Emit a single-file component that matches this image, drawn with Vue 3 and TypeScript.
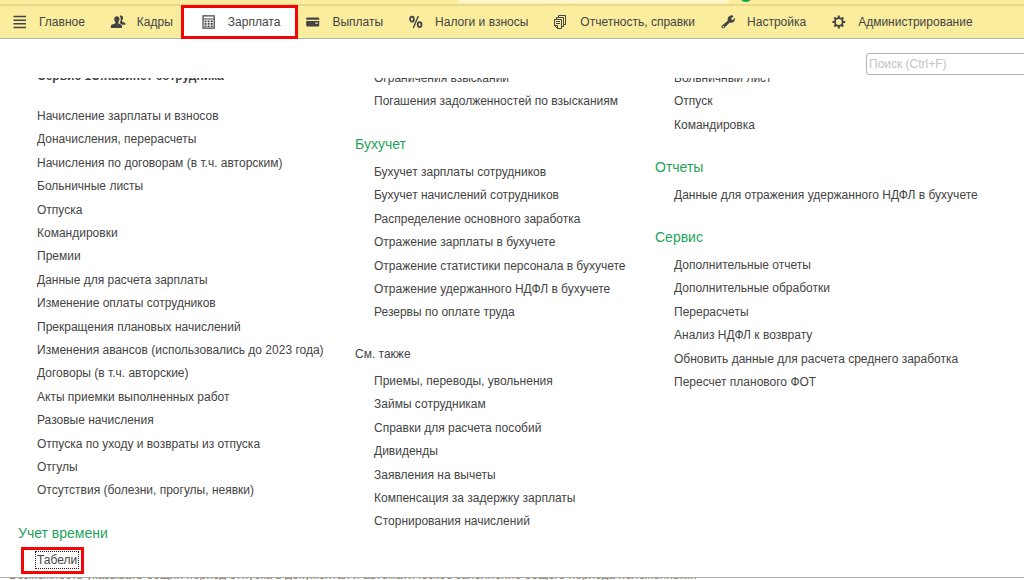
<script setup lang="ts">
interface NavItem { icon: string; label: string; active?: boolean }
interface Group { title?: string; kind?: 'green' | 'plain' | 'bold'; items: string[] }

const nav: NavItem[] = [
  { icon: 'menu', label: 'Главное' },
  { icon: 'people', label: 'Кадры' },
  { icon: 'calc', label: 'Зарплата', active: true },
  { icon: 'card', label: 'Выплаты' },
  { icon: 'percent', label: 'Налоги и взносы' },
  { icon: 'docs', label: 'Отчетность, справки' },
  { icon: 'wrench', label: 'Настройка' },
  { icon: 'gear', label: 'Администрирование' },
]

const columns: Group[][] = [
  [
    {
      title: 'Сервис 1С:Кабинет сотрудника',
      kind: 'bold',
      items: [
        'Начисление зарплаты и взносов',
        'Доначисления, перерасчеты',
        'Начисления по договорам (в т.ч. авторским)',
        'Больничные листы',
        'Отпуска',
        'Командировки',
        'Премии',
        'Данные для расчета зарплаты',
        'Изменение оплаты сотрудников',
        'Прекращения плановых начислений',
        'Изменения авансов (использовались до 2023 года)',
        'Договоры (в т.ч. авторские)',
        'Акты приемки выполненных работ',
        'Разовые начисления',
        'Отпуска по уходу и возвраты из отпуска',
        'Отгулы',
        'Отсутствия (болезни, прогулы, неявки)',
      ],
    },
    { title: 'Учет времени', kind: 'green', items: ['Табели'] },
  ],
  [
    { items: ['Ограничения взысканий', 'Погашения задолженностей по взысканиям'] },
    {
      title: 'Бухучет',
      kind: 'green',
      items: [
        'Бухучет зарплаты сотрудников',
        'Бухучет начислений сотрудников',
        'Распределение основного заработка',
        'Отражение зарплаты в бухучете',
        'Отражение статистики персонала в бухучете',
        'Отражение удержанного НДФЛ в бухучете',
        'Резервы по оплате труда',
      ],
    },
    {
      title: 'См. также',
      kind: 'plain',
      items: [
        'Приемы, переводы, увольнения',
        'Займы сотрудникам',
        'Справки для расчета пособий',
        'Дивиденды',
        'Заявления на вычеты',
        'Компенсация за задержку зарплаты',
        'Сторнирования начислений',
      ],
    },
  ],
  [
    { items: ['Больничный лист', 'Отпуск', 'Командировка'] },
    { title: 'Отчеты', kind: 'green', items: ['Данные для отражения удержанного НДФЛ в бухучете'] },
    {
      title: 'Сервис',
      kind: 'green',
      items: [
        'Дополнительные отчеты',
        'Дополнительные обработки',
        'Перерасчеты',
        'Анализ НДФЛ к возврату',
        'Обновить данные для расчета среднего заработка',
        'Пересчет планового ФОТ',
      ],
    },
  ],
]

const selected = 'Табели'
</script>

<template>
  <div class="app">
    <div class="titlebar">
      <div class="title-field"></div>
      <span class="title-dot"></span>
    </div>

    <nav class="sections">
      <button v-for="n in nav" :key="n.label" type="button" class="section" :class="{ active: n.active }">
        <svg class="icon" viewBox="0 0 14 14" width="14" height="14" aria-hidden="true">
          <g v-if="n.icon === 'menu'">
            <path d="M.5 1.500h12.500M.5 5.200h12.500M.5 8.800h12.500M.5 12.500h12.500" stroke="currentColor" stroke-width="1.600" />
          </g>
          <g v-else-if="n.icon === 'people'" fill="currentColor">
            <path d="M8.700.8c2-.7 3.500.5 3.400 2.300-.1 1.300-.5 2-1.100 2.500v.9l2.700 1.200c.6.300.8.800.8 2.100h-3.200L9.400 8.500 8.600 7.600c.8-.9 1.200-2.100 1.100-3.400 0-1.300-.3-2.500-1-3.400z" />
            <path d="M5.900 1.200c1.600 0 2.600 1.200 2.600 2.900 0 1.400-.5 2.500-1.200 3.100v1.100l3 1.500c.6.300.8 1.200.8 3.200H-.2c0-2 .2-2.900.8-3.200l3.800-1.500V7.200C3.700 6.600 3.200 5.500 3.200 4.100c0-1.700 1.100-2.900 2.700-2.900z" />
          </g>
          <g v-else-if="n.icon === 'calc'">
            <path fill="none" stroke="currentColor" stroke-width="1.200" d="M1 .9h11.200v12.200H1zM1 4h11.200" />
            <path fill="currentColor" d="M2.500 5.500h2v1.700h-2zM5.600 5.500h2v1.700h-2zM8.700 5.500h2v1.700h-2zM2.500 8h2v1.700h-2zM5.600 8h2v1.700h-2zM8.700 8h2v1.700h-2zM2.500 10.500h2v1.600h-2zM5.600 10.500h2v1.600h-2zM8.700 10.500h2v1.600h-2z" />
          </g>
          <g v-else-if="n.icon === 'card'" fill="currentColor">
            <path d="M1.200 2.500h11q1 0 1 1v1.300H.2V3.500q0-1 1-1z" />
            <path d="M.2 6h13v4.500q0 1-1 1h-11q-1 0-1-1zM9.300 7.600v1.200h2.500V7.600z" fill-rule="evenodd" />
          </g>
          <g v-else-if="n.icon === 'percent'" fill="none" stroke="currentColor">
            <ellipse cx="3" cy="4.200" rx="1.900" ry="2.500" stroke-width="1.800" />
            <ellipse cx="10.600" cy="9.600" rx="1.900" ry="2.500" stroke-width="1.800" />
            <path d="M9.300 1L4.300 13" stroke-width="1.400" />
          </g>
          <g v-else-if="n.icon === 'docs'" fill="none" stroke="currentColor" stroke-width="1">
            <path d="M.5 4.500h7v9h-4l-3-3zM.5 10.500h3v3M2.500 4.500v-2h7v9h-2M4.500 2.500v-2h7v9h-2M2 6.500h4M2 8.500h4" />
          </g>
          <g v-else-if="n.icon === 'wrench'">
            <path fill="currentColor" d="M12.600 1.300L10.300 3.500l.3 1.200 1.300.2L14 2.800c.4 2.100-.7 4.600-3.200 4.900-.8.100-1.500-.1-2-.3L3.400 12.700c-.7.800-1.700.8-2.400.2-.7-.7-.6-1.700.1-2.400l5.600-4.800C6.300 3.100 7.400.8 9.700.4c1.100-.2 2.100.1 2.900.9zM2.300 11.100a.7.7 0 1 0 .1 1.400.7.7 0 0 0-.1-1.400z" fill-rule="evenodd" />
          </g>
          <g v-else fill="none" stroke="currentColor">
            <circle cx="6.800" cy="7" r="3.900" stroke-width="1.800" />
            <path d="M6.800.6v2.400M6.800 11v2.400M.4 7h2.400M10.800 7h2.400M2.300 2.500L4 4.200M9.600 9.800l1.700 1.700M2.300 11.500L4 9.800M9.600 4.200l1.700-1.700" stroke-width="2" />
          </g>
        </svg>
        <span>{{ n.label }}</span>
      </button>
    </nav>

    <main class="panel">
      <div class="search">
        <input type="text" placeholder="Поиск (Ctrl+F)" aria-label="Поиск" />
      </div>
      <div class="viewport">
        <div class="columns">
          <div v-for="(col, ci) in columns" :key="ci" class="column">
            <section v-for="(g, gi) in col" :key="gi" class="group">
              <h2 v-if="g.title" class="heading" :class="g.kind">{{ g.title }}</h2>
              <ul>
                <li v-for="item in g.items" :key="item">
                  <a href="#" :class="{ selected: item === selected }"><span>{{ item }}</span></a>
                </li>
              </ul>
            </section>
          </div>
        </div>
      </div>
    </main>

    <footer class="under">
      <p>Возможность указывать общий период отпуска в документах и автоматическое заполнение общего периода положенными</p>
    </footer>
  </div>
</template>

<style>
body {
  margin: 0;
  overflow: hidden;
}
</style>

<style scoped>
.app {
  display: flex;
  flex-direction: column;
  height: 100vh;
  overflow: hidden;
  background: #fff;
  color: #444;
  font: 12px/16px "Liberation Sans", Arial, sans-serif;
}
.titlebar {
  display: flex;
  align-items: flex-start;
  flex: none;
  height: 4px;
  overflow: hidden;
  background: #fbed9e;
  border-bottom: 2px solid #e6d88d;
}
.title-field {
  width: 270px;
  height: 3px;
  margin-left: 459px;
  background: #fdf6cf;
}
.title-dot {
  width: 14px;
  height: 14px;
  margin: -12px 0 0 10px;
  border-radius: 50%;
  background: #12a04b;
}
.sections {
  display: flex;
  flex: none;
  height: 32px;
  background: #fbed9e;
  border-bottom: 1px solid #b5b5b5;
}
.section {
  display: flex;
  align-items: center;
  gap: 12px;
  padding: 0 13px;
  border: 0;
  background: none;
  color: #444;
  font: inherit;
  white-space: nowrap;
}
.section.active {
  margin: 0 -4px;
  padding: 0 17px 0 20px;
  background: #fff;
  outline: 3px solid #f50505;
  outline-offset: -2px;
}
.icon {
  flex: none;
  overflow: visible;
}
.panel {
  display: flex;
  flex: 1;
  flex-direction: column;
  min-height: 0;
  border-bottom: 1px solid #a9a9a9;
}
.search {
  display: flex;
  flex: none;
  justify-content: flex-end;
  padding: 14px 0 3px;
}
.search input {
  box-sizing: border-box;
  width: 162px;
  height: 22px;
  margin-right: -4px;
  padding: 0 2px;
  border: 1px solid #b8b8b8;
  border-radius: 3px;
  background: #fff;
  color: #444;
  font: inherit;
}
.search input::placeholder {
  color: #c4c4c4;
  opacity: 1;
}
.viewport {
  flex: 1;
  min-height: 0;
  overflow: hidden;
}
.columns {
  display: grid;
  grid-template-columns: 337px 300px 1fr;
  margin-top: -12px;
  padding-left: 18px;
}
.group + .group {
  margin-top: 15px;
}
ul {
  margin: 0;
  padding: 0 0 0 19px;
  list-style: none;
}
li {
  display: flex;
  align-items: center;
  height: 23px;
}
li:nth-child(5n + 2),
li:nth-child(5n + 4) {
  height: 24px;
}
li a {
  color: inherit;
  text-decoration: none;
  white-space: nowrap;
}
li a.selected {
  margin-left: -16px;
  padding: 2px 4px 3px 13px;
  border: 3px solid #f50505;
}
.selected span {
  outline: 1px dotted #202020;
  outline-offset: 1px;
}
.heading {
  margin: 0;
  font-size: 12px;
  font-weight: 400;
  line-height: 30px;
}
.heading.green {
  color: #1fa35c;
  font-size: 14px;
  line-height: 32px;
}
.heading.bold {
  padding: 0 0 17px 19px;
  font-weight: 700;
  line-height: 21px;
}
.under {
  display: flex;
  align-items: flex-end;
  flex: none;
  height: 2px;
  overflow: hidden;
  background: #fff;
}
.under p {
  margin: 0 0 -3px 9px;
  color: #8a826c;
  white-space: nowrap;
}
</style>
